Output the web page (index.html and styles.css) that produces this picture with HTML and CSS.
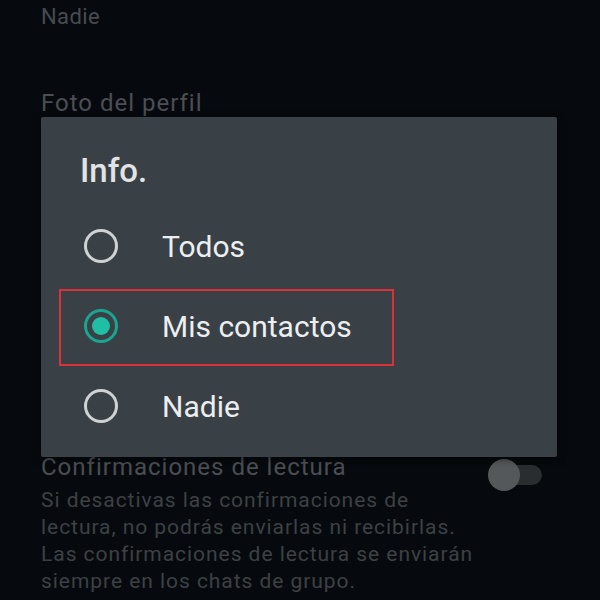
FILE: index.html
```html
<!DOCTYPE html>
<html lang="es">
  <head>
    <meta charset="UTF-8" />
    <meta name="viewport" content="width=device-width, initial-scale=1.0" />
    <title>Privacidad</title>
    <link rel="stylesheet" href="styles.css">
  </head>
  <body>
    <div class="privacy">
      <div class="setting setting-first">
        <div class="setting-value">Nadie</div>
      </div>
      <div class="setting">
        <div class="setting-title">Foto del perfil</div>
      </div>
      <div class="setting setting-switch">
        <div class="setting-text">
          <div class="setting-title">Confirmaciones de lectura</div>
          <div class="setting-desc">
            Si desactivas las confirmaciones de lectura, no podrás enviarlas ni recibirlas.
            Las confirmaciones de lectura se enviarán siempre en los chats de grupo.
          </div>
        </div>
        <div class="switch">
          <span class="switch-track"></span>
          <span class="switch-thumb"></span>
        </div>
      </div>
    </div>

    <!-- dialogo de opciones para "Info." -->
    <div class="dialog">
      <div class="dialog-title">Info.</div>
      <div class="option">
        <span class="radio"></span>
        <span class="option-label">Todos</span>
      </div>
      <div class="option">
        <span class="radio checked"></span>
        <span class="option-label">Mis contactos</span>
        <span class="highlight"></span>
      </div>
      <div class="option">
        <span class="radio"></span>
        <span class="option-label">Nadie</span>
      </div>
    </div>
  </body>
</html>
```

FILE: styles.css
```css
body {
  margin: 0;
  height: 600px;
  overflow: hidden;
  background-color: #060a0e;
  font-family: Roboto, "Liberation Sans", sans-serif;
  position: relative;
}

/* lista de ajustes */
.privacy {
  padding: 4px 58px 0 41px;
}
.setting-first {
  margin-bottom: 59px;
}
.setting-title {
  font-size: 24px;
  line-height: 28px;
  letter-spacing: 1px;
  color: #4b4f53;
}
.setting-value {
  font-size: 22px;
  line-height: 26px;
  letter-spacing: 0.4px;
  color: #474b4f;
}
.setting-switch {
  display: flex;
  margin-top: 336px;
}
.setting-text {
  flex: 1;
}
.setting-desc {
  margin-top: 6px;
  font-size: 21px;
  line-height: 27px;
  letter-spacing: 0.95px;
  color: #3d4144;
}
.switch {
  position: relative;
  width: 54px;
  height: 32px;
  margin-top: 6px;
  flex-shrink: 0;
}
.switch-track {
  position: absolute;
  left: 2px;
  right: 0;
  top: 6px;
  height: 20px;
  border-radius: 10px;
  background-color: #2a2d30;
}
.switch-thumb {
  position: absolute;
  left: 0;
  top: 0;
  width: 32px;
  height: 32px;
  border-radius: 50%;
  background-color: #55585b;
}

/* dialogo */
.dialog {
  position: absolute;
  left: 41px;
  top: 117px;
  width: 516px;
  height: 340px;
  box-sizing: border-box;
  padding-top: 35px;
  background-color: #394147;
  border-radius: 2px;
  box-shadow: 0 2px 8px rgba(0, 0, 0, 0.5);
}
.dialog-title {
  padding-left: 39px;
  margin-bottom: 16px;
  font-size: 33px;
  line-height: 38px;
  font-weight: 500;
  color: #e1e3e4;
}
.option {
  position: relative;
  height: 80px;
  display: flex;
  align-items: center;
  padding-left: 43px;
}
.option-label {
  font-size: 30px;
  color: #eceeef;
}
.radio {
  width: 34px;
  height: 34px;
  box-sizing: border-box;
  border: 3px solid #cfd2d4;
  border-radius: 50%;
  margin-right: 44px;
  display: flex;
  align-items: center;
  justify-content: center;
}
.radio.checked {
  border-color: #1ba590;
}
.radio.checked::after {
  content: "";
  width: 18px;
  height: 18px;
  border-radius: 50%;
  background-color: #20bea5;
}

/* recuadro rojo sobre la opcion */
.highlight {
  position: absolute;
  left: 18px;
  top: 3px;
  width: 335px;
  height: 77px;
  box-sizing: border-box;
  border: 2px solid #d9323d;
}
```
